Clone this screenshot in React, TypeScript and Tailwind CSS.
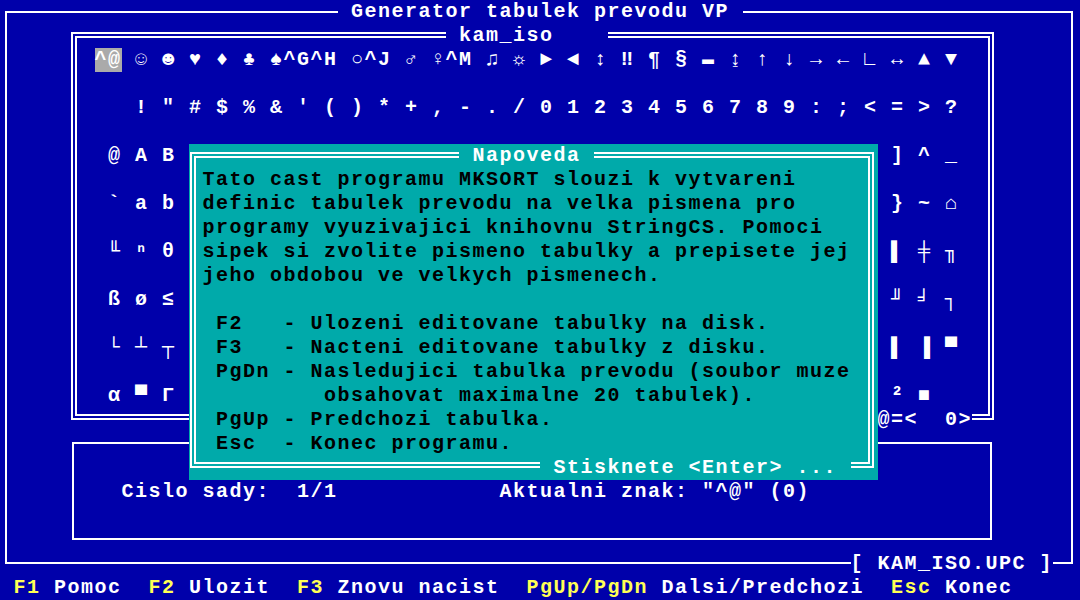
import React from "react";

const Chars = ({ s, c = "" }: { s: string; c?: string }) => (
  <>
    {Array.from(s).map((ch, i) => (
      <span key={i} className={`w-[13.5px] shrink-0 ${c}`}>
        {ch}
      </span>
    ))}
  </>
);

const L = ({ cls, s, tc = "" }: { cls: string; s: string; tc?: string }) => (
  <div className={`flex whitespace-pre ${cls}`}>
    <Chars s={s} c={tc} />
  </div>
);

const ent = (chars: string) =>
  Array.from(chars)
    .map((c) => " " + c)
    .join("");

const gap26 = " ".repeat(26);

export default function App() {
  return (
    <div className="w-[1080px] h-[600px] bg-[#0000aa] grid grid-cols-[repeat(80,13.5px)] grid-rows-[repeat(25,24px)] overflow-hidden text-white font-bold text-[20px] leading-[24px] font-['Liberation_Mono',monospace]">
      {/* outer frame */}
      <div className="col-start-1 col-span-80 row-start-1 row-span-24 border-2 border-white ml-[5px] mr-[7px] mt-[11px] mb-[12px]" />
      <L cls="col-start-26 col-span-30 row-start-1 bg-[#0000aa]" s=" Generator tabulek prevodu VP " />

      {/* table frame */}
      <div className="col-start-6 col-span-69 row-start-2 row-span-17 border-[6px] border-double border-white ml-[3px] mr-[5px] mt-[8px] mb-[12px]" />
      <L cls="col-start-34 col-span-12 row-start-2 bg-[#0000aa]" s=" kam_iso    " />

      {/* table rows */}
      <L cls="col-start-8 col-span-2 row-start-3 bg-[#aaaaaa]" s="^@" />
      <L
        cls="col-start-10 col-span-62 row-start-3"
        s=" ☺ ☻ ♥ ♦ ♣ ♠^G^H ○^J ♂ ♀^M ♫ ☼ ► ◄ ↕ ‼ ¶ § ▬ ↨ ↑ ↓ → ← ∟ ↔ ▲ ▼"
      />
      <L cls="col-start-8 col-span-64 row-start-5" s={ent(" !\"#$%&'()*+,-./0123456789:;<=>?")} />
      <L cls="col-start-8 col-span-64 row-start-7" s={ent("@ABCDEFGHIJKLMNOPQRSTUVWXYZ[\\]^_")} />
      <L cls="col-start-8 col-span-64 row-start-9" s={ent("`abcdefghijklmnopqrstuvwxyz{|}~⌂")} />
      <L cls="col-start-8 col-span-64 row-start-11" s={ent("╙ⁿθ" + gap26 + "▌╪╖")} />
      <L cls="col-start-8 col-span-64 row-start-13" s={ent("ßø≤" + gap26 + "╜╛┐")} />
      <L cls="col-start-8 col-span-64 row-start-15" s={ent("└┴┬" + gap26 + "▌▐▀")} />
      <L cls="col-start-8 col-span-64 row-start-17" s={ent("α▀Γ" + gap26 + "²■ ")} />
      <L cls="col-start-66 col-span-7 row-start-18 bg-[#0000aa]" s="@=<  0>" />

      {/* bottom info box */}
      <div className="col-start-6 col-span-69 row-start-19 row-span-5 border-2 border-white ml-[4px] mr-[7px] mt-[10px] mb-[12px]" />
      <L cls="col-start-10 col-span-16 row-start-21" s="Cislo sady:  1/1" />
      <L cls="col-start-38 col-span-23 row-start-21" s={'Aktualni znak: "^@" (0)'} />

      <L cls="col-start-64 col-span-15 row-start-24 bg-[#0000aa]" s="[ KAM_ISO.UPC ]" />

      {/* status bar */}
      <div className="col-start-1 col-span-80 row-start-25 flex whitespace-pre">
        <Chars s=" " />
        <Chars s="F1" c="text-[#ffff55]" />
        <Chars s=" Pomoc  " />
        <Chars s="F2" c="text-[#ffff55]" />
        <Chars s=" Ulozit  " />
        <Chars s="F3" c="text-[#ffff55]" />
        <Chars s=" Znovu nacist  " />
        <Chars s="PgUp/PgDn" c="text-[#ffff55]" />
        <Chars s=" Dalsi/Predchozi  " />
        <Chars s="Esc" c="text-[#ffff55]" />
        <Chars s=" Konec" />
      </div>

      {/* help popup */}
      <div className="col-start-15 col-span-51 row-start-7 row-span-14 bg-[#00aaaa] grid grid-cols-[repeat(51,13.5px)] grid-rows-[repeat(14,24px)]">
        <div className="col-start-1 col-span-51 row-start-1 row-span-14 border-[6px] border-double border-white ml-[1px] mr-[4px] mt-[8px] mb-[12px]" />
        <L cls="col-start-21 col-span-10 row-start-1 bg-[#00aaaa]" s=" Napoveda " />
        <L cls="col-start-2 col-span-49 row-start-2" tc="text-black" s="Tato cast programu MKSORT slouzi k vytvareni" />
        <L cls="col-start-2 col-span-49 row-start-3" tc="text-black" s="definic tabulek prevodu na velka pismena pro" />
        <L cls="col-start-2 col-span-49 row-start-4" tc="text-black" s="programy vyuzivajici knihovnu StringCS. Pomoci" />
        <L cls="col-start-2 col-span-49 row-start-5" tc="text-black" s="sipek si zvolite pismeno tabulky a prepisete jej" />
        <L cls="col-start-2 col-span-49 row-start-6" tc="text-black" s="jeho obdobou ve velkych pismenech." />
        <L cls="col-start-2 col-span-49 row-start-8" tc="text-black" s=" F2   - Ulozeni editovane tabulky na disk." />
        <L cls="col-start-2 col-span-49 row-start-9" tc="text-black" s=" F3   - Nacteni editovane tabulky z disku." />
        <L cls="col-start-2 col-span-49 row-start-10" tc="text-black" s=" PgDn - Nasledujici tabulka prevodu (soubor muze" />
        <L cls="col-start-2 col-span-49 row-start-11" tc="text-black" s="         obsahovat maximalne 20 tabulek)." />
        <L cls="col-start-2 col-span-49 row-start-12" tc="text-black" s=" PgUp - Predchozi tabulka." />
        <L cls="col-start-2 col-span-49 row-start-13" tc="text-black" s=" Esc  - Konec programu." />
        <L cls="col-start-27 col-span-23 row-start-14 bg-[#00aaaa]" s=" Stisknete <Enter> ... " />
      </div>
    </div>
  );
}
